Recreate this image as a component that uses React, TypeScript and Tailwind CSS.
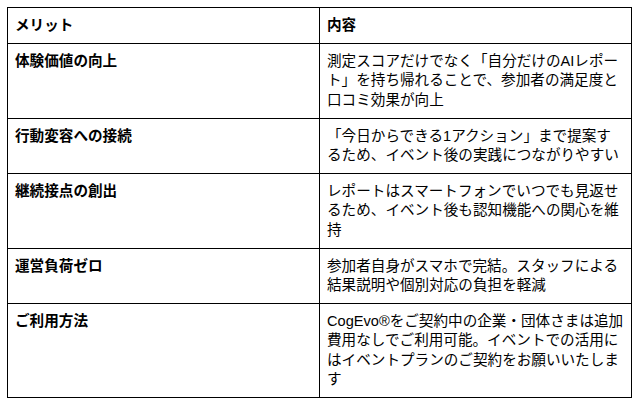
const rows = [
  {
    title: "体験価値の向上",
    body: "測定スコアだけでなく「自分だけのAIレポート」を持ち帰れることで、参加者の満足度と口コミ効果が向上",
  },
  {
    title: "行動変容への接続",
    body: "「今日からできる1アクション」まで提案するため、イベント後の実践につながりやすい",
  },
  {
    title: "継続接点の創出",
    body: "レポートはスマートフォンでいつでも見返せるため、イベント後も認知機能への関心を維持",
  },
  {
    title: "運営負荷ゼロ",
    body: "参加者自身がスマホで完結。スタッフによる結果説明や個別対応の負担を軽減",
  },
  {
    title: "ご利用方法",
    body: "CogEvo®をご契約中の企業・団体さまは追加費用なしでご利用可能。イベントでの活用にはイベントプランのご契約をお願いいたします",
  },
];

export default function App() {
  return (
    <div
      className="bg-white p-[7px] text-black"
      style={{ fontFamily: '"Liberation Sans", "Noto Sans CJK JP", sans-serif' }}
    >
      <table className="w-[625px] table-fixed border-collapse text-[14.6px] leading-[19.2px]">
        <thead>
          <tr>
            <th className="w-1/2 border border-black px-[7px] py-[8px] text-left align-top font-bold">
              メリット
            </th>
            <th className="w-1/2 border border-black px-[7px] py-[8px] text-left align-top font-bold">
              内容
            </th>
          </tr>
        </thead>
        <tbody>
          {rows.map((r) => (
            <tr key={r.title}>
              <td className="border border-black px-[7px] py-[8px] align-top font-bold">{r.title}</td>
              <td className="border border-black px-[7px] py-[8px] align-top">{r.body}</td>
            </tr>
          ))}
        </tbody>
      </table>
    </div>
  );
}
